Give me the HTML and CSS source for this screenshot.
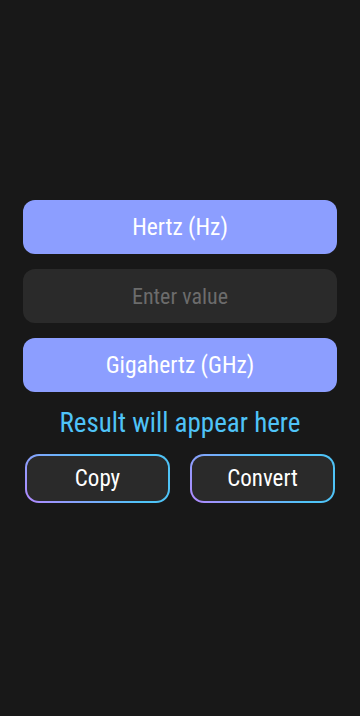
FILE: index.html
```html
<!DOCTYPE html>
<html>
<head>
<meta charset="utf-8">
<link rel="stylesheet" href="styles.css">
</head>
<body>
<main class="screen">
  <div class="panel">
    <div class="unit">Hertz (Hz)</div>
    <div class="field">Enter value</div>
    <div class="unit">Gigahertz (GHz)</div>
    <div class="result">Result will appear here</div>
    <div class="actions">
      <div class="btn">Copy</div>
      <div class="btn">Convert</div>
    </div>
  </div>
</main>
</body>
</html>
```
FILE: styles.css
```css
html, body {
  margin: 0;
  padding: 0;
  background: #181818;
}
.screen {
  width: 360px;
  height: 716px;
  display: flex;
  flex-direction: column;
  font-family: Roboto, "Noto Sans", sans-serif;
  font-stretch: 80%;
}
.panel {
  margin-top: 200px;
  padding: 0 23px;
  display: flex;
  flex-direction: column;
}
.unit {
  height: 54px;
  border-radius: 12px;
  background: #8c9eff;
  color: #ffffff;
  font-size: 23.5px;
  display: flex;
  align-items: center;
  justify-content: center;
}
.field {
  height: 54px;
  margin: 15px 0;
  border-radius: 12px;
  background: #2a2a2a;
  color: #6c6c6c;
  font-size: 22px;
  display: flex;
  align-items: center;
  justify-content: center;
}
.result {
  height: 62px;
  color: #4fc3f7;
  font-size: 27px;
  display: flex;
  align-items: center;
  justify-content: center;
}
.actions {
  display: flex;
  gap: 20px;
  padding: 0 2px;
}
.btn {
  flex: 1;
  height: 45px;
  border: 2px solid transparent;
  border-radius: 14px;
  background:
    linear-gradient(#2a2a2a, #2a2a2a) padding-box,
    linear-gradient(45deg, #b388ff, #4fc3f7 60%) border-box;
  color: #ffffff;
  font-size: 23px;
  display: flex;
  align-items: center;
  justify-content: center;
}
```
